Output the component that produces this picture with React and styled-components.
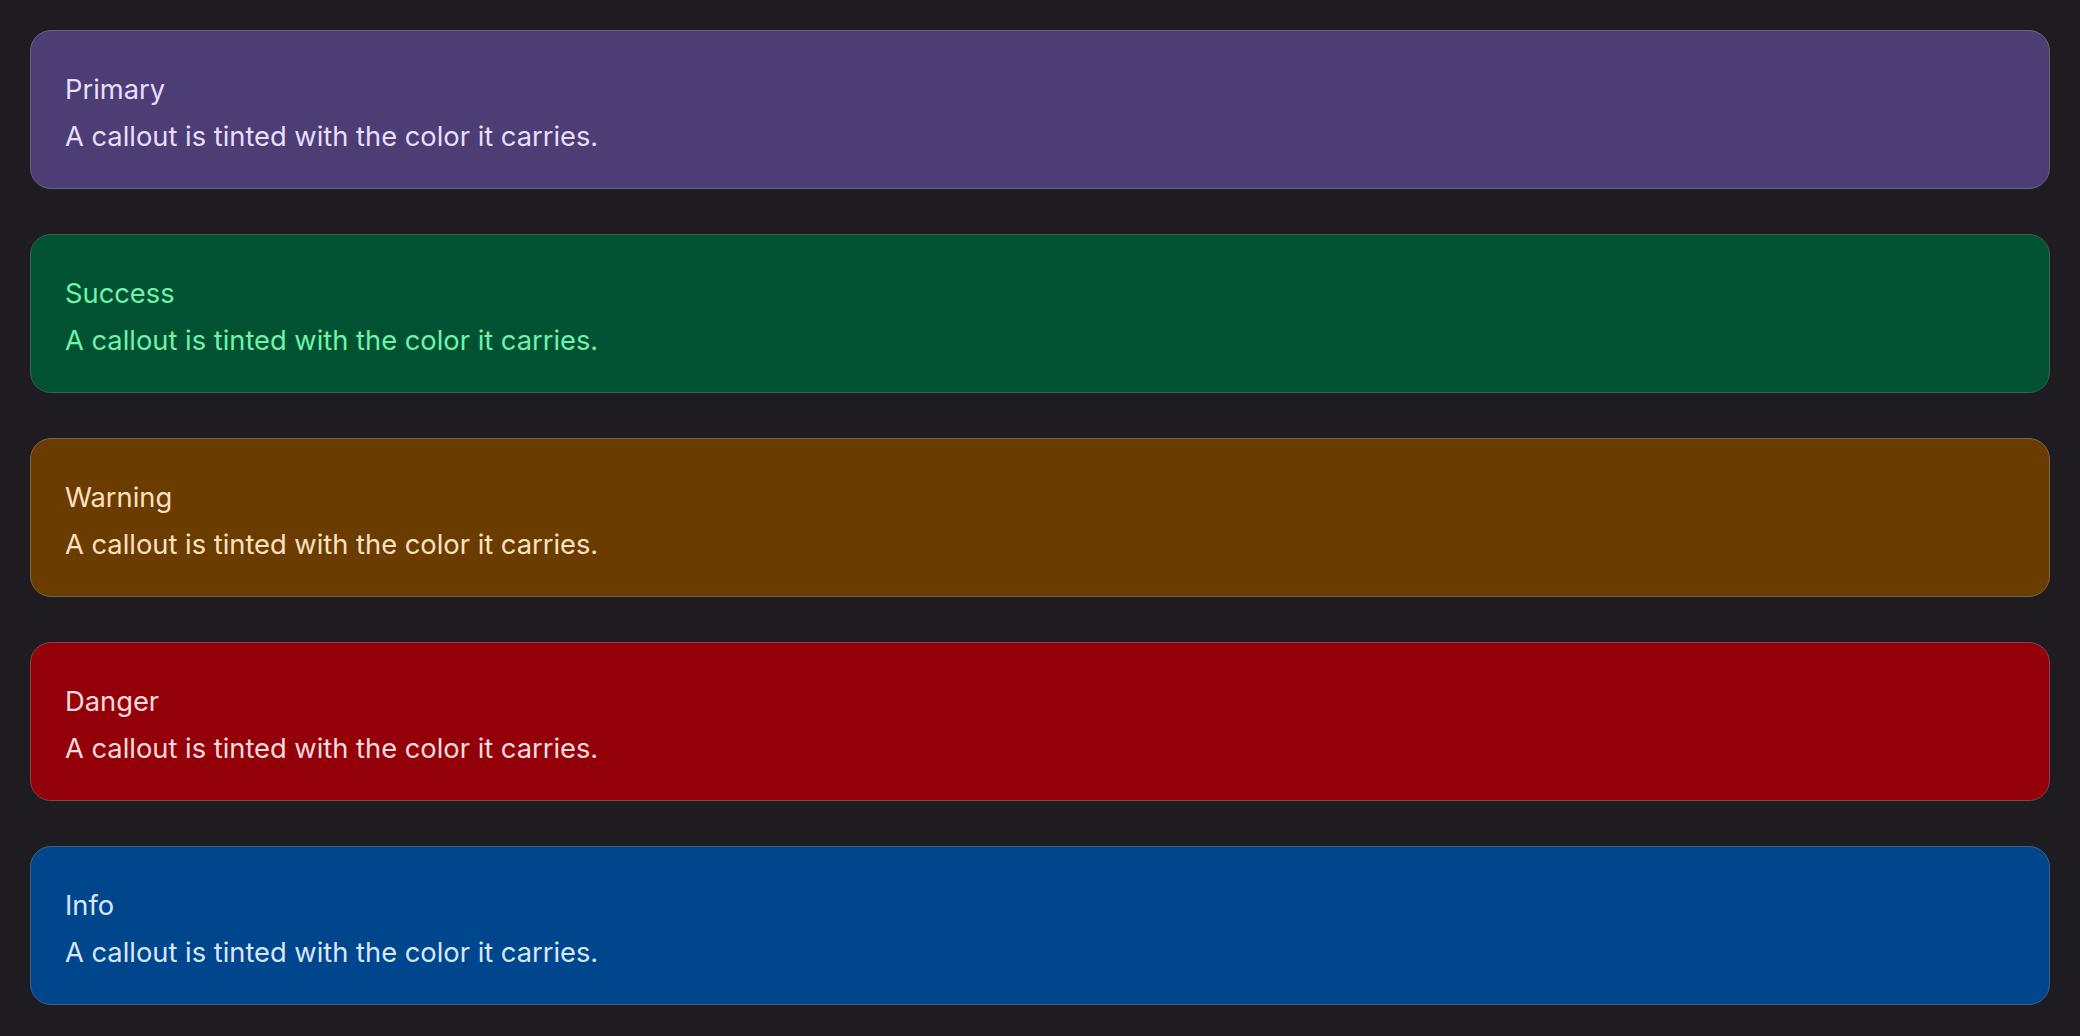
import React from 'react'
import styled, { createGlobalStyle } from 'styled-components'

const GlobalStyle = createGlobalStyle`
  html, body {
    margin: 0;
    padding: 0;
    background: #1e1c21;
  }
  body {
    font-family: Inter, "Noto Sans", "Liberation Sans", sans-serif;
    -webkit-font-smoothing: antialiased;
  }
`

const tones = {
  primary: { bg: '#4c3d74', fg: '#e9ddff', border: '#6a6279' },
  success: { bg: '#005233', fg: '#6ff3a9', border: '#35644f' },
  warning: { bg: '#6a3c00', fg: '#ffe0c2', border: '#786543' },
  danger: { bg: '#93000a', fg: '#ffdcdc', border: '#87454c' },
  info: { bg: '#00468c', fg: '#d9e6ff', border: '#475d80' },
}

const Page = styled.main`
  display: flex;
  flex-direction: column;
  gap: 45px;
  padding: 30px 30px 31px;
`

const Callout = styled.section`
  display: flex;
  flex-direction: column;
  gap: 11px;
  height: 159px;
  box-sizing: border-box;
  padding: 41px 34px 34px;
  border-radius: 21px;
  border: 1.4px solid ${p => tones[p.tone].border};
  background: ${p => tones[p.tone].bg};
  color: ${p => tones[p.tone].fg};
`

const Title = styled.div`
  font-size: 27.3px;
  line-height: 36px;
  font-weight: 400;
`

const Body = styled.p`
  margin: 0;
  font-size: 27.3px;
  line-height: 36px;
  font-weight: 400;
`

const items = [
  ['primary', 'Primary'],
  ['success', 'Success'],
  ['warning', 'Warning'],
  ['danger', 'Danger'],
  ['info', 'Info'],
]

export default function App() {
  return (
    <>
      <GlobalStyle />
      <Page>
        {items.map(([tone, label]) => (
          <Callout key={tone} tone={tone}>
            <Title>{label}</Title>
            <Body>A callout is tinted with the color it carries.</Body>
          </Callout>
        ))}
      </Page>
    </>
  )
}
